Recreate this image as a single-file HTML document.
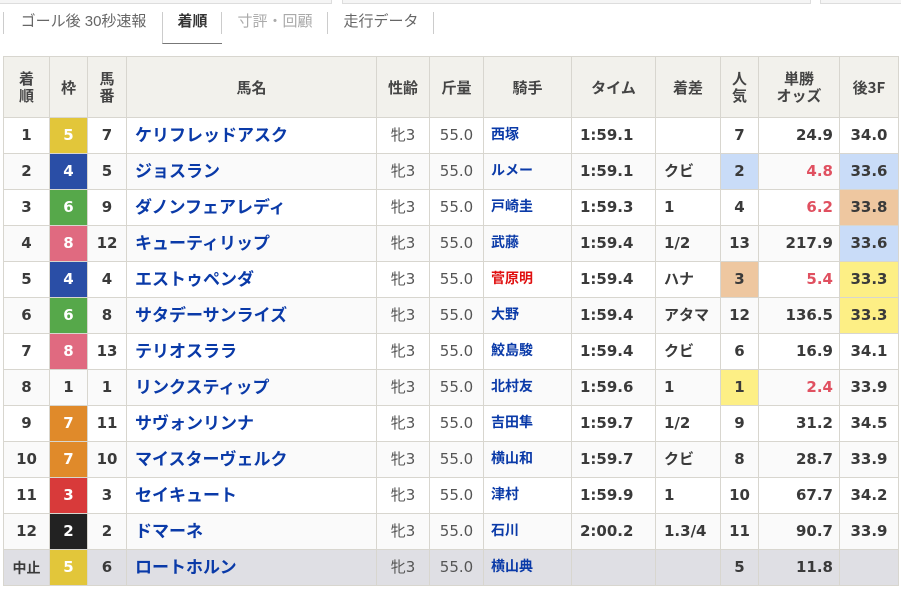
<!DOCTYPE html><html><head><meta charset="utf-8"><style>
body{margin:0;width:901px;height:597px;overflow:hidden;background:#fff;font-family:"Liberation Sans","Noto Sans CJK JP",sans-serif;color:#333}
.top{position:absolute;top:0;left:0;width:901px;height:4px}
.top div{position:absolute;top:-2px;height:5px;border:1px solid #ddd;border-top:none;background:#f5f5f5}
.tabs{position:absolute;top:12px;left:3px;height:25px;font-size:15px}
.tab{position:absolute;top:0;height:22px;line-height:20px;border-left:1px solid #ccc;text-align:center;color:#666}
table{position:absolute;left:3px;top:56px;border-collapse:collapse;table-layout:fixed;width:895px;font-family:"DejaVu Sans","Noto Sans CJK JP",sans-serif}
td,th{border:1px solid #d8d6cf;padding:0;height:35px;text-align:center;font-size:15px;line-height:1}
th{background:#f2f1ec;height:60px;font-size:15px;line-height:17px;font-weight:bold;color:#444;font-family:"Noto Sans CJK JP",sans-serif}
td{font-weight:bold;color:#3a3a3a}
tr:nth-child(odd) td{background:#fafafa}
td.n{text-align:left;padding-left:8px;color:#0a3aa8;font-size:17px;font-family:"Noto Sans CJK JP",sans-serif;padding-bottom:5px;height:30px}
td.j{text-align:left;padding-left:7px;color:#0a3aa8;font-size:14px;font-family:"Noto Sans CJK JP",sans-serif;padding-bottom:3px;height:32px}
td.s{font-weight:normal;color:#555}
td.t{text-align:left;padding-left:8px}
td.d{text-align:left;padding-left:8px}
td.o{text-align:right;padding-right:6px}
.r{color:#e05060!important}
.w{color:#fff!important}
.B{background:#c9dcf8!important}.O{background:#eec7a0!important}.Y{background:#fdef85!important}
tr.last td{background:#dfdfe4!important}
</style></head><body>
<div class="top"><div style="left:-10px;width:340px"></div><div style="left:342px;width:467px"></div><div style="left:820px;width:280px"></div></div>
<div class="tabs">
<div class="tab" style="left:0;width:159px">ゴール後 30秒速報</div>
<div class="tab" style="left:159px;width:59px;color:#333;font-weight:bold;border-bottom:1px solid #777;height:31px">着順</div>
<div class="tab" style="left:218px;width:106px;color:#aaa">寸評・回顧</div>
<div class="tab" style="left:324px;width:106px">走行データ</div>
<div class="tab" style="left:430px;width:1px"></div>
</div>
<table>
<colgroup><col style="width:46px"><col style="width:38px"><col style="width:39px"><col style="width:250px"><col style="width:53px"><col style="width:54px"><col style="width:88px"><col style="width:84px"><col style="width:65px"><col style="width:38px"><col style="width:81px"><col style="width:59px"></colgroup>
<tr><th>着<br>順</th><th>枠</th><th>馬<br>番</th><th>馬名</th><th>性齢</th><th>斤量</th><th>騎手</th><th>タイム</th><th>着差</th><th>人<br>気</th><th>単勝<br>オッズ</th><th>後3F</th></tr>
<tr><td>1</td><td class="w" style="background:#e2c63a">5</td><td>7</td><td class="n">ケリフレッドアスク</td><td class="s">牝3</td><td class="s">55.0</td><td class="j">西塚</td><td class="t">1:59.1</td><td class="d"></td><td>7</td><td class="o">24.9</td><td>34.0</td></tr>
<tr><td>2</td><td class="w" style="background:#2a4ea6!important">4</td><td>5</td><td class="n">ジョスラン</td><td class="s">牝3</td><td class="s">55.0</td><td class="j">ルメー</td><td class="t">1:59.1</td><td class="d">クビ</td><td class="B">2</td><td class="o r">4.8</td><td class="B">33.6</td></tr>
<tr><td>3</td><td class="w" style="background:#56a84a!important">6</td><td>9</td><td class="n">ダノンフェアレディ</td><td class="s">牝3</td><td class="s">55.0</td><td class="j">戸崎圭</td><td class="t">1:59.3</td><td class="d">1</td><td>4</td><td class="o r">6.2</td><td class="O">33.8</td></tr>
<tr><td>4</td><td class="w" style="background:#e06a80!important">8</td><td>12</td><td class="n">キューティリップ</td><td class="s">牝3</td><td class="s">55.0</td><td class="j">武藤</td><td class="t">1:59.4</td><td class="d">1/2</td><td>13</td><td class="o">217.9</td><td class="B">33.6</td></tr>
<tr><td>5</td><td class="w" style="background:#2a4ea6!important">4</td><td>4</td><td class="n">エストゥペンダ</td><td class="s">牝3</td><td class="s">55.0</td><td class="j" style="color:#e01010">菅原明</td><td class="t">1:59.4</td><td class="d">ハナ</td><td class="O">3</td><td class="o r">5.4</td><td class="Y">33.3</td></tr>
<tr><td>6</td><td class="w" style="background:#56a84a!important">6</td><td>8</td><td class="n">サタデーサンライズ</td><td class="s">牝3</td><td class="s">55.0</td><td class="j">大野</td><td class="t">1:59.4</td><td class="d">アタマ</td><td>12</td><td class="o">136.5</td><td class="Y">33.3</td></tr>
<tr><td>7</td><td class="w" style="background:#e06a80!important">8</td><td>13</td><td class="n">テリオスララ</td><td class="s">牝3</td><td class="s">55.0</td><td class="j">鮫島駿</td><td class="t">1:59.4</td><td class="d">クビ</td><td>6</td><td class="o">16.9</td><td>34.1</td></tr>
<tr><td>8</td><td>1</td><td>1</td><td class="n">リンクスティップ</td><td class="s">牝3</td><td class="s">55.0</td><td class="j">北村友</td><td class="t">1:59.6</td><td class="d">1</td><td class="Y">1</td><td class="o r">2.4</td><td>33.9</td></tr>
<tr><td>9</td><td class="w" style="background:#e08a2a!important">7</td><td>11</td><td class="n">サヴォンリンナ</td><td class="s">牝3</td><td class="s">55.0</td><td class="j">吉田隼</td><td class="t">1:59.7</td><td class="d">1/2</td><td>9</td><td class="o">31.2</td><td>34.5</td></tr>
<tr><td>10</td><td class="w" style="background:#e08a2a!important">7</td><td>10</td><td class="n">マイスターヴェルク</td><td class="s">牝3</td><td class="s">55.0</td><td class="j">横山和</td><td class="t">1:59.7</td><td class="d">クビ</td><td>8</td><td class="o">28.7</td><td>33.9</td></tr>
<tr><td>11</td><td class="w" style="background:#d83a3a!important">3</td><td>3</td><td class="n">セイキュート</td><td class="s">牝3</td><td class="s">55.0</td><td class="j">津村</td><td class="t">1:59.9</td><td class="d">1</td><td>10</td><td class="o">67.7</td><td>34.2</td></tr>
<tr><td>12</td><td class="w" style="background:#222!important">2</td><td>2</td><td class="n">ドマーネ</td><td class="s">牝3</td><td class="s">55.0</td><td class="j">石川</td><td class="t">2:00.2</td><td class="d">1.3/4</td><td>11</td><td class="o">90.7</td><td>33.9</td></tr>
<tr class="last"><td style="font-size:14px;font-family:'Noto Sans CJK JP',sans-serif">中止</td><td class="w" style="background:#e2c63a!important">5</td><td>6</td><td class="n">ロートホルン</td><td class="s">牝3</td><td class="s">55.0</td><td class="j">横山典</td><td class="t"></td><td class="d"></td><td>5</td><td class="o">11.8</td><td></td></tr>
</table>
</body></html>
